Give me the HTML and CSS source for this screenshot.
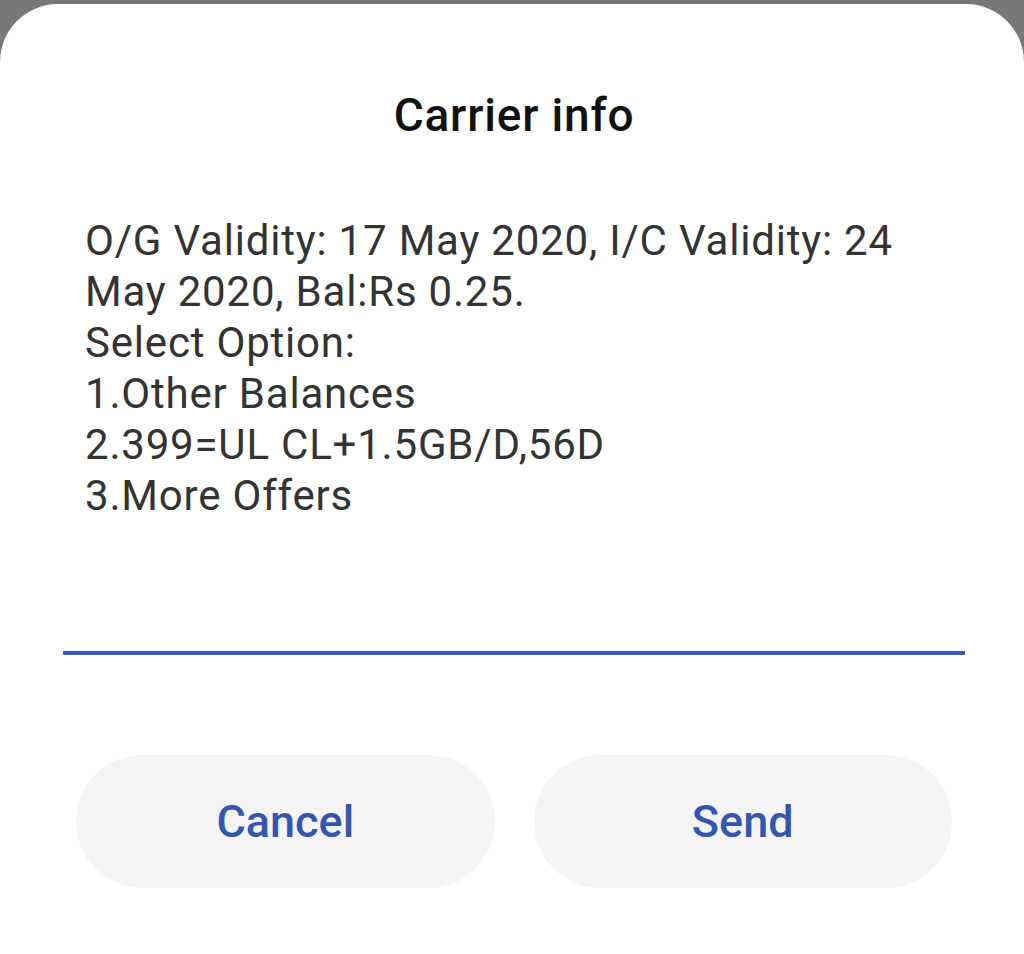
FILE: index.html
```html
<!DOCTYPE html>
<html lang="en">
<head>
<meta charset="utf-8">
<title>Carrier info</title>
<link rel="stylesheet" href="styles.css">
</head>
<body>
<div class="dialog">
  <h1 class="title">Carrier info</h1>
  <div class="message">O/G Validity: 17 May 2020, I/C Validity: 24 May 2020, Bal:Rs 0.25.<br>Select Option:<br>1.Other Balances<br>2.399=UL CL+1.5GB/D,56D<br>3.More Offers</div>
  <div class="field"></div>
  <div class="actions">
    <button class="btn">Cancel</button>
    <button class="btn">Send</button>
  </div>
</div>
</body>
</html>
```
FILE: styles.css
```css
html, body {
  margin: 0;
  padding: 0;
  height: 100%;
  background: #787878;
  overflow: hidden;
}
body {
  font-family: Roboto, "Liberation Sans", sans-serif;
  padding-top: 4px;
  box-sizing: border-box;
}
.dialog {
  background: #ffffff;
  border-radius: 58px 58px 0 0;
  height: 100%;
  box-sizing: border-box;
  padding: 84px 59px 0 63px;
  display: flex;
  flex-direction: column;
}
.title {
  margin: 0;
  font-size: 46px;
  line-height: 54px;
  font-weight: 500;
  letter-spacing: 0.8px;
  color: #111111;
  text-align: center;
  padding-left: 0;
}
.message {
  margin-top: 73px;
  padding-left: 22px;
  padding-right: 0;
  font-size: 42px;
  line-height: 51px;
  letter-spacing: 0.8px;
  color: #333333;
}
.field {
  height: 130px;
  border-bottom: 4px solid #3a5db4;
}
.actions {
  margin-top: 100px;
  padding: 0 13px 0 13px;
  display: flex;
  gap: 39px;
}
.btn {
  flex: 1;
  height: 133px;
  border: none;
  border-radius: 67px;
  background: #f4f4f4;
  font-family: Roboto, "Liberation Sans", sans-serif;
  font-size: 45px;
  font-weight: 500;
  color: #3556ad;
  padding: 0;
}
```
